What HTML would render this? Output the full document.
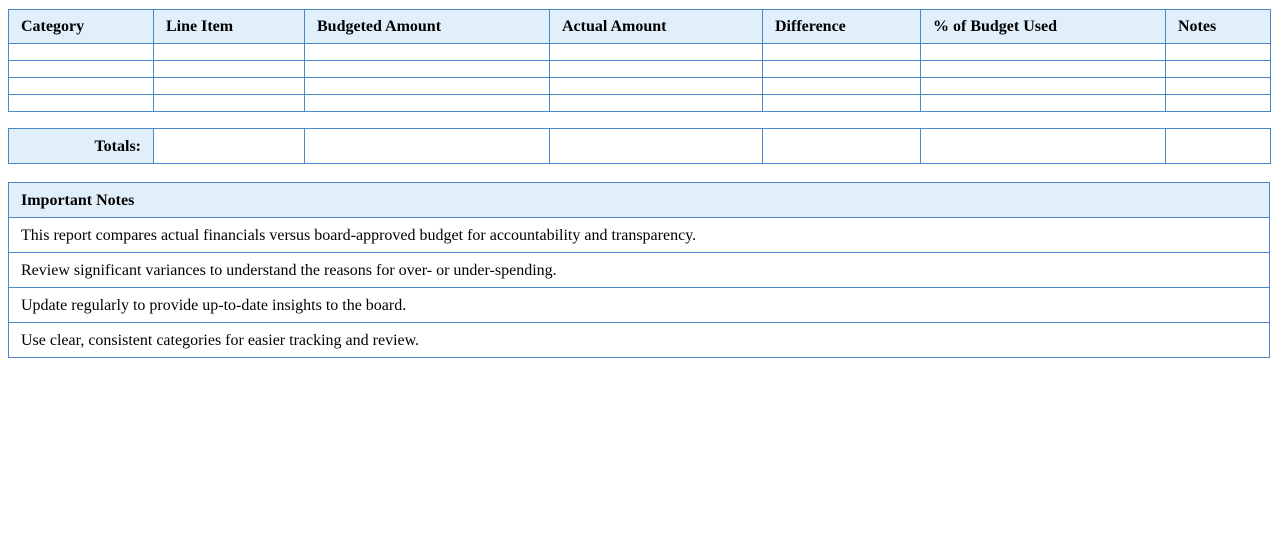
<!DOCTYPE html>
<html><head><style>
body{margin:0;background:#fff;font-family:"Liberation Serif",serif;font-size:16px;color:#000}
table{border-collapse:collapse;table-layout:fixed;position:absolute;left:8px;width:1262px}
td,th{border:1px solid #4a86c8;padding:1px 12px 0;text-align:left;overflow:hidden;white-space:nowrap}
th{background:#e1effb;font-weight:bold;height:32px}
.d td{height:16px;padding:0}
.t td{height:33px}
.t td.l{background:#e1effb;font-weight:bold;text-align:right}
.n td{height:33px}
.n th{height:33px}
</style></head><body>
<table style="top:9px">
<colgroup><col style="width:145px"><col style="width:151px"><col style="width:245px"><col style="width:213px"><col style="width:158px"><col style="width:245px"><col style="width:105px"></colgroup>
<tr><th>Category</th><th>Line Item</th><th>Budgeted Amount</th><th>Actual Amount</th><th>Difference</th><th>% of Budget Used</th><th>Notes</th></tr>
<tr class="d"><td></td><td></td><td></td><td></td><td></td><td></td><td></td></tr>
<tr class="d"><td></td><td></td><td></td><td></td><td></td><td></td><td></td></tr>
<tr class="d"><td></td><td></td><td></td><td></td><td></td><td></td><td></td></tr>
<tr class="d"><td></td><td></td><td></td><td></td><td></td><td></td><td></td></tr>
</table>
<table style="top:128px">
<colgroup><col style="width:145px"><col style="width:151px"><col style="width:245px"><col style="width:213px"><col style="width:158px"><col style="width:245px"><col style="width:105px"></colgroup>
<tr class="t"><td class="l">Totals:</td><td></td><td></td><td></td><td></td><td></td><td></td></tr>
</table>
<table style="top:182px" class="n">
<tr><th>Important Notes</th></tr>
<tr><td>This report compares actual financials versus board-approved budget for accountability and transparency.</td></tr>
<tr><td>Review significant variances to understand the reasons for over- or under-spending.</td></tr>
<tr><td>Update regularly to provide up-to-date insights to the board.</td></tr>
<tr><td>Use clear, consistent categories for easier tracking and review.</td></tr>
</table>
</body></html>
